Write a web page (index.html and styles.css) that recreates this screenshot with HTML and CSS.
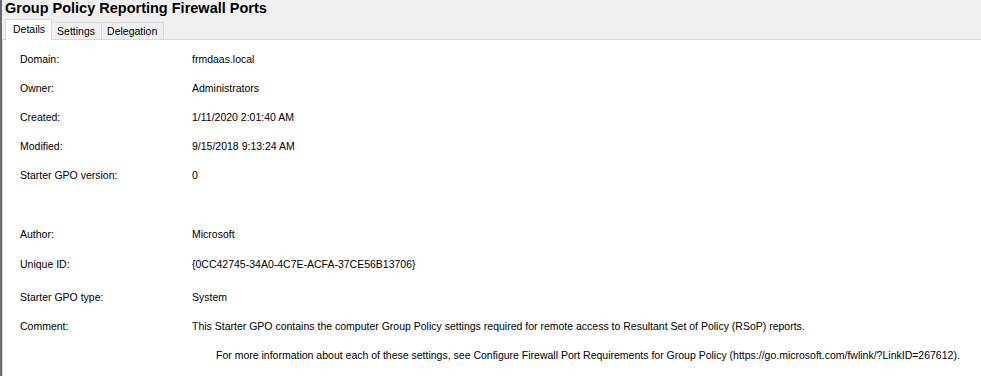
FILE: index.html
```html
<!DOCTYPE html>
<html>
<head>
<meta charset="utf-8">
<link rel="stylesheet" href="styles.css">
</head>
<body>
<div class="frame">
  <div class="header">
    <h1 class="title">Group Policy Reporting Firewall Ports</h1>
    <div class="tabs">
      <div class="tab active">Details</div>
      <div class="tab">Settings</div>
      <div class="tab">Delegation</div>
    </div>
  </div>
  <div class="content">
    <div class="row"><div class="label">Domain:</div><div class="value">frmdaas.local</div></div>
    <div class="row"><div class="label">Owner:</div><div class="value">Administrators</div></div>
    <div class="row"><div class="label">Created:</div><div class="value">1/11/2020 2:01:40 AM</div></div>
    <div class="row"><div class="label">Modified:</div><div class="value">9/15/2018 9:13:24 AM</div></div>
    <div class="row"><div class="label">Starter GPO version:</div><div class="value">0</div></div>
    <div class="row spacer"></div>
    <div class="row h30"><div class="label">Author:</div><div class="value">Microsoft</div></div>
    <div class="row h33"><div class="label">Unique ID:</div><div class="value">{0CC42745-34A0-4C7E-ACFA-37CE56B13706}</div></div>
    <div class="row"><div class="label">Starter GPO type:</div><div class="value">System</div></div>
    <div class="row"><div class="label">Comment:</div><div class="value">This Starter GPO contains the computer Group Policy settings required for remote access to Resultant Set of Policy (RSoP) reports.</div></div>
    <div class="row"><div class="label"></div><div class="value indent">For more information about each of these settings, see Configure Firewall Port Requirements for Group Policy (https://go.microsoft.com/fwlink/?LinkID=267612).</div></div>
  </div>
</div>
</body>
</html>
```
FILE: styles.css
```css
html, body {
  margin: 0;
  padding: 0;
  background: #ffffff;
}
.frame {
  height: 376px;
  border-left: 2px solid #6b6b6b;
  box-shadow: inset 1px 0 0 #d8d8d8;
  font-family: "Liberation Sans", Arial, sans-serif;
  font-size: 10.5px;
  color: #000;
  overflow: hidden;
}
.header {
  background: #f0f0f0;
  height: 39px;
  border-bottom: 1px solid #d9d9d9;
  display: flex;
  flex-direction: column;
}
.title {
  margin: 0;
  padding: 0 0 0 3px;
  font-size: 14.5px;
  font-weight: bold;
  line-height: 16px;
  height: 18px;
  color: #000;
}
.tabs {
  display: flex;
  align-items: flex-end;
  padding-left: 3px;
  margin-top: 1px;
  height: 20px;
}
.tab {
  height: 16px;
  line-height: 16px;
  padding: 0 6px 0 5px;
  border: 1px solid #d9d9d9;
  border-bottom: none;
  border-left: none;
  background: #f0f0f0;
}
.tab.active {
  height: 20px;
  line-height: 18px;
  background: #fff;
  border-left: 1px solid #d9d9d9;
  padding: 0 6px 0 7px;
  margin-bottom: -1px;
  position: relative;
}
.tab:last-child {
  padding: 0 6px 0 5px;
}
.content {
  padding-top: 4px;
  padding-left: 18px;
}
.row {
  display: flex;
  height: 29px;
  align-items: center;
}
.row.spacer {
  height: 30px;
}
.row.h30 {
  height: 30px;
}
.row.h33 {
  height: 33px;
  padding-bottom: 3px;
  box-sizing: border-box;
}
.label {
  width: 172px;
  flex: none;
}
.value {
  white-space: nowrap;
}
.value.indent {
  padding-left: 24px;
}
```
